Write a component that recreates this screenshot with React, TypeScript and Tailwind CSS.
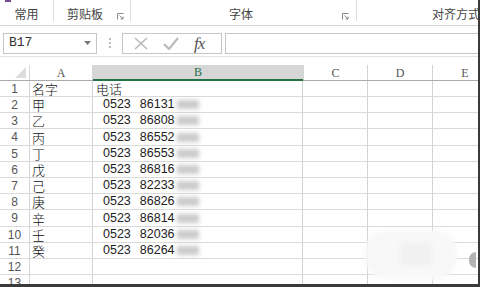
const cjk = { fontFamily: '"Noto Sans CJK SC", "Noto Sans", sans-serif' };

const rows: { name: string; phone: string; h: number }[] = [
  { name: "名字", phone: "", h: 16 },
  { name: "甲", phone: "86131", h: 16 },
  { name: "乙", phone: "86808", h: 16 },
  { name: "丙", phone: "86552", h: 17 },
  { name: "丁", phone: "86553", h: 16 },
  { name: "戊", phone: "86816", h: 16 },
  { name: "己", phone: "82233", h: 16 },
  { name: "庚", phone: "86826", h: 16 },
  { name: "辛", phone: "86814", h: 17 },
  { name: "壬", phone: "82036", h: 16 },
  { name: "癸", phone: "86264", h: 16 },
  { name: "", phone: "", h: 16 },
  { name: "", phone: "", h: 16 },
];

function Launcher() {
  return (
    <svg width="7" height="7" viewBox="0 0 7 7" className="shrink-0">
      <path d="M0.5 6.5V0.5H6.5" stroke="#8a8a8a" fill="none" />
      <path d="M2.5 2.5L6 6M6 3.5V6H3.5" stroke="#8a8a8a" fill="none" />
    </svg>
  );
}

export default function App() {
  return (
    <div className="relative w-[480px] h-[287px] overflow-hidden bg-white text-[#444]">
      {/* Ribbon group labels */}
      <div className="flex h-[26px] border-b border-[#d6d6d6]" style={cjk}>
        <div className="relative shrink-0 w-[54px] border-r border-[#dcdcdc] mb-[4px] flex items-end justify-center pb-[1px] text-[12px] leading-none">
          <div className="absolute left-[5px] top-0 w-[6px] h-[2px] bg-[#7a4a9a]" />
          常用
        </div>
        <div className="shrink-0 w-[77px] border-r border-[#dcdcdc] mb-[4px] flex items-end pl-[13px] pr-[6px] pb-[1px] text-[12px] leading-none">
          <span className="flex-1">剪贴板</span>
          <Launcher />
        </div>
        <div className="shrink-0 w-[226px] border-r border-[#dcdcdc] mb-[4px] flex items-end pl-[98px] pr-[7px] pb-[1px] text-[12px] leading-none">
          <span className="flex-1">字体</span>
          <Launcher />
        </div>
        <div className="flex-1 min-w-0 mb-[4px] flex items-end justify-end pb-[1px] text-[12px] leading-none whitespace-nowrap">
          对齐方式
        </div>
      </div>

      {/* Formula bar */}
      <div className="flex items-center h-[31px] pt-[4px] border-b border-[#e2e2e2]">
        <div className="shrink-0 ml-[3px] w-[94px] h-[21px] border border-[#c6c6c6] flex items-center pl-[5px] pr-[5px]">
          <span className="flex-1 text-[13px] text-[#333]" style={{ fontFamily: '"Liberation Mono", monospace' }}>
            B17
          </span>
          <svg width="7" height="4" viewBox="0 0 7 4">
            <path d="M0 0H7L3.5 4Z" fill="#777" />
          </svg>
        </div>
        <div className="shrink-0 w-[25px] flex flex-col items-center gap-[2px]">
          <div className="w-[2px] h-[2px] bg-[#bbb]" />
          <div className="w-[2px] h-[2px] bg-[#bbb]" />
          <div className="w-[2px] h-[2px] bg-[#bbb]" />
        </div>
        <div className="shrink-0 w-[100px] h-[21px] border border-[#c6c6c6] flex items-center pl-[11px] gap-[15px]">
          <svg width="14" height="13" viewBox="0 0 14 13">
            <path d="M1 1L13 12M13 1L1 12" stroke="#b5b5b5" strokeWidth="1.4" fill="none" />
          </svg>
          <svg width="16" height="13" viewBox="0 0 16 13">
            <path d="M1 7L6 12L15 1" stroke="#b8b8b8" strokeWidth="2" fill="none" />
          </svg>
          <span
            className="text-[17px] italic leading-none text-[#555] tracking-[-1px]"
            style={{ fontFamily: '"Liberation Serif", serif' }}
          >
            fx
          </span>
        </div>
        <div className="ml-[3px] flex-1 min-w-0 h-[21px] border border-[#c6c6c6] border-r-0" />
      </div>

      {/* Sheet */}
      <div className="mt-[8px]">
        {/* column headers */}
        <div
          className="flex h-[16px] border-b border-[#ababab] text-[12px] text-[#555]"
          style={{ fontFamily: '"Liberation Serif", serif' }}
        >
          <div className="relative shrink-0 w-[30px] border-r border-[#d4d4d4]">
            <svg width="11" height="11" viewBox="0 0 11 11" className="absolute right-[3px] bottom-[2px]">
              <path d="M11 0V11H0Z" fill="#dcdcdc" />
            </svg>
          </div>
          <div className="shrink-0 w-[63px] border-r border-[#d4d4d4] flex items-center justify-center">A</div>
          <div className="shrink-0 w-[210px] bg-[#d6d6d6] border-b-2 border-[#217346] -mb-[1px] flex items-center justify-center text-[#217346]">
            B
          </div>
          <div className="shrink-0 w-[65px] border-l border-r border-[#d4d4d4] flex items-center justify-center">C</div>
          <div className="shrink-0 w-[65px] border-r border-[#d4d4d4] flex items-center justify-center">D</div>
          <div className="shrink-0 w-[65px] border-r border-[#d4d4d4] flex items-center justify-center">E</div>
        </div>

        {rows.map((r, i) => (
          <div
            key={i}
            className="flex border-b border-[#dadada]"
            style={{ height: r.h }}
          >
            <div
              className="shrink-0 w-[30px] border-r border-[#d4d4d4] flex items-center justify-center text-[12px] leading-none text-[#555]"
              style={{ fontFamily: '"Liberation Sans", sans-serif' }}
            >
              {i + 1}
            </div>
            <div
              className="shrink-0 w-[63px] border-r border-[#d4d4d4] pl-[2px] flex items-center text-[13px] leading-none text-[#111] font-light"
              style={cjk}
            >
              {r.name}
            </div>
            <div className="shrink-0 w-[210px] border-r border-[#d4d4d4] flex items-center">
              {i === 0 ? (
                <span className="pl-[3px] text-[13px] leading-none text-[#111] font-light" style={cjk}>
                  电话
                </span>
              ) : r.phone ? (
                <span
                  className="pl-[10px] flex items-center text-[12.5px] leading-none text-[#222]"
                  style={{ fontFamily: '"Liberation Sans", sans-serif' }}
                >
                  <span>0523</span>
                  <span className="ml-[9px]">{r.phone}</span>
                  <span className="ml-[2px] w-[22px] h-[9px] bg-[#cbcbcb] blur-[2px]" />
                </span>
              ) : null}
            </div>
            <div className="shrink-0 w-[65px] border-r border-[#d4d4d4]" />
            <div className="shrink-0 w-[65px] border-r border-[#d4d4d4]" />
            <div className="shrink-0 w-[65px] border-r border-[#d4d4d4]" />
          </div>
        ))}
      </div>

      {/* smudge overlay bottom right */}
      <div className="absolute left-[365px] top-[230px] w-[92px] h-[50px] rounded-[22px] bg-[#f8f8f8] blur-[2px]">
        <div className="absolute left-[35px] top-[12px] w-[32px] h-[24px] bg-[#f1f1f1]" />
      </div>
      <div className="absolute left-[469px] top-[252px] w-[7px] h-[16px] rounded-l-full bg-[#b3b3b3]" />

      {/* frame edges */}
      <div className="absolute right-0 top-0 w-[2px] h-full bg-[#3a3a3a]" />
      <div className="absolute left-0 bottom-0 w-full h-[3px] bg-[#3a3a3a]" />
    </div>
  );
}
